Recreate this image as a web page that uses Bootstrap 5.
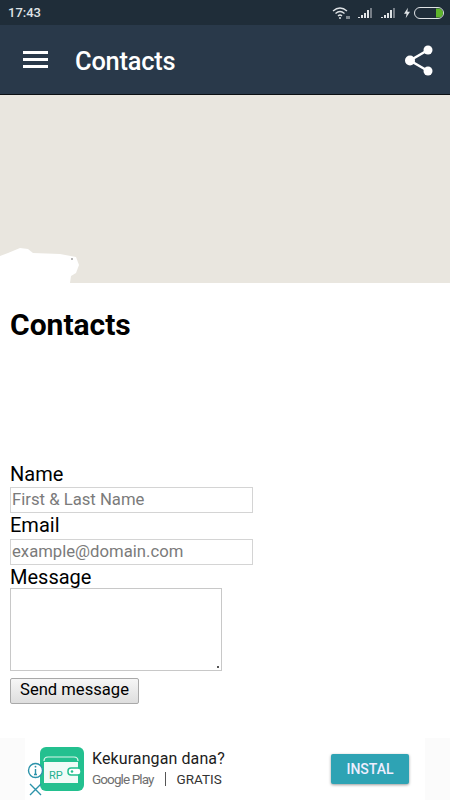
<!DOCTYPE html>
<html lang="en">
<head>
  <meta charset="UTF-8" />
  <meta name="viewport" content="width=device-width, initial-scale=1" />
  <title>Contacts</title>
  <link href="https://cdn.jsdelivr.net/npm/bootstrap@5.3.2/dist/css/bootstrap.min.css" rel="stylesheet" />
  <style>
    html, body { height: 800px; overflow: hidden; }
    body { font-family: Roboto, "Liberation Sans", sans-serif; background: #fff; color: #000; }
    .phone { width: 450px; height: 800px; }
    .status-strip { height: 25px; background: #1f2d39; color: #dfe3e6; font-size: 13px; font-weight: 500; padding: 0 6px 0 8px; }
    .time-text { padding-top: 1px; }
    .app-bar { height: 70px; background: #29394a; border-bottom: 1px solid #0b0f13; padding: 0 17px 0 23px; }
    .app-title { font-size: 25.4px; font-weight: 500; color: #fff; margin: 4px 0 0 27px; letter-spacing: -.2px; }
    .burger { width: 25px; }
    .burger span { display: block; height: 3px; background: #fff; margin-bottom: 4px; }
    .burger span:last-child { margin-bottom: 0; }
    .map-box { height: 188px; background: #e9e6df; }
    .map-blob { left: 0; bottom: 0; }
    .page-body { padding: 0 10px; height: 455px; }
    .page-title { font-size: 30px; font-weight: 700; line-height: 34px; margin: 25px 0 0; }
    .lost-text { height: 120px; }
    .field-label { display: block; font-size: 20px; line-height: 25px; height: 25px; }
    .label-email { height: 26px; }
    .label-msg { height: 23px; }
    .field-input { display: block; width: 243px; height: 26px; border: 1px solid #d4d4d4; padding: 0 1px 2px; font-size: 16.7px; color: #000; outline: 0; border-radius: 0; }
    .field-input::placeholder { color: #7b7b7b; opacity: 1; }
    .field-area { display: block; width: 212px; height: 83px; border: 1px solid #c8c8c8; outline: 0; border-radius: 0; padding: 1px; resize: none; background: linear-gradient(#555, #555) no-repeat right 2px bottom 2px / 2px 2px; }
    .send-btn { width: 129px; height: 26px; margin-top: 7px; padding: 0 0 2px; font-size: 16.6px; line-height: 22px; color: #000; border: 1px solid #a9a9a9; border-radius: 2px; background: linear-gradient(#f6f6f6, #dedede); }
    .ad-strip { height: 62px; background: #fbfbfb; padding: 0 25px; }
    .ad-inner { height: 62px; background: #fff; }
    .ad-icon { left: 15px; top: 9px; }
    .ad-info { left: 2px; top: 24px; }
    .ad-close { left: 4px; top: 45px; }
    .ad-copy { left: 67px; top: 10px; }
    .ad-head { font-size: 16px; line-height: 22px; color: #1c1c1c; letter-spacing: .1px; }
    .ad-sub { font-size: 13.5px; line-height: 18px; color: #333; }
    .ad-play { color: #6f6f6f; letter-spacing: -.9px; }
    .ad-bar { width: 1px; height: 14px; background: #555; margin: 0 11px; }
    .ad-btn { left: 306px; top: 16px; width: 78px; height: 30px; background: #2ea3b4; color: #eef; font-size: 14px; font-weight: 500; border-radius: 2px; box-shadow: 0 1px 3px rgba(0,0,0,.4); }
  </style>
</head>
<body>
  <div class="phone d-flex flex-column">
    <div class="status-strip d-flex align-items-center justify-content-between">
      <span class="time-text">17:43</span>
      <div class="d-flex align-items-center">
        <svg width="18" height="14" viewBox="0 0 18 14" fill="none" stroke="#dfe3e6" stroke-width="1.3">
          <path d="M1 5 Q8 -1 15 5" />
          <path d="M3.5 7.5 Q8 3.5 12.5 7.5" />
          <path d="M6 10 Q8 8 10 10" />
          <circle cx="8" cy="12" r="1" fill="#dfe3e6" stroke="none" />
          <path d="M15 10v3M17 10v3" stroke-width="1" />
        </svg>
        <svg class="ms-2" width="15" height="11" viewBox="0 0 15 11" fill="#dfe3e6"><path d="M0 10h2v1H0zM3 8h2v3H3zM6 6h2v5H6zM9 3h2v8H9z" /><path d="M12 1h2v10h-2z" opacity=".45" /></svg>
        <svg class="ms-2" width="15" height="11" viewBox="0 0 15 11" fill="#dfe3e6"><path d="M0 10h2v1H0zM3 8h2v3H3zM6 6h2v5H6zM9 3h2v8H9z" /><path d="M12 1h2v10h-2z" opacity=".45" /></svg>
        <svg class="ms-2" width="6" height="12" viewBox="0 0 7 12" fill="#dfe3e6"><path d="M4.5 0 0 7h3l-1 5 5-7.500H4z" /></svg>
        <svg class="ms-1" width="30" height="12" viewBox="0 0 30 12"><rect x=".5" y=".5" width="29" height="11" rx="5.500" fill="none" stroke="#dfe3e6" /><path d="M22 1.500h2.500a4.500 4.500 0 0 1 0 9H22z" fill="#5fb52c" /></svg>
      </div>
    </div>

    <div class="app-bar d-flex align-items-center">
      <div class="burger"><span></span><span></span><span></span></div>
      <div class="app-title flex-grow-1">Contacts</div>
      <svg width="30" height="32" viewBox="0 0 30 32" fill="#fff" stroke="#fff">
        <path d="M25 6 7 16.500 25 27" fill="none" stroke-width="2.500" />
        <circle cx="25" cy="6" r="4.500" stroke="none" />
        <circle cx="7" cy="16.500" r="5" stroke="none" />
        <circle cx="25" cy="27" r="4.500" stroke="none" />
      </svg>
    </div>

    <div class="map-box position-relative">
      <svg class="map-blob position-absolute" width="80" height="38" viewBox="0 0 80 38" fill="#fff">
        <path d="M0 11 8 8 20 3 28 4 33 8 60 9 76 12 79 20 76 28 71 31 70 38H0z" />
        <circle cx="72" cy="14" r=".7" fill="#333" />
      </svg>
    </div>

    <div class="page-body">
      <h1 class="page-title">Contacts</h1>
      <div class="lost-text"></div>
      <form>
        <label class="field-label" for="nameField">Name</label>
        <input class="field-input" id="nameField" type="text" placeholder="First &amp; Last Name" />
        <label class="field-label label-email" for="emailField">Email</label>
        <input class="field-input" id="emailField" type="text" placeholder="example@domain.com" />
        <label class="field-label label-msg" for="msgField">Message</label>
        <textarea class="field-area" id="msgField"></textarea>
        <button class="send-btn" type="button">Send message</button>
      </form>
    </div>

    <div class="ad-strip">
      <div class="ad-inner position-relative">
        <svg class="ad-icon position-absolute" width="44" height="44" viewBox="0 0 44 44">
          <rect width="44" height="44" rx="6" fill="#23c08f" />
          <path d="M4 36V14q0-4 4-4h26q4 0 4 4v22z" fill="#f1fbf7" />
          <path d="M4 14q0-4 4-4h26q4 0 4 4v1H4z" fill="#23c08f" />
          <path d="M4 14q0-4 4-4h26q4 0 4 4" fill="none" stroke="#d8f5ea" stroke-width="1.200" />
          <rect x="28" y="21" width="13" height="7" rx="3" fill="#fff" stroke="#23c08f" stroke-width="1.500" />
          <circle cx="32" cy="24.500" r="1.300" fill="#23c08f" />
          <text x="9" y="32" font-size="11" fill="#23b08f" font-family="Roboto, sans-serif">RP</text>
        </svg>
        <svg class="ad-info position-absolute" width="17" height="17" viewBox="0 0 17 17" fill="none" stroke="#2c93aa" stroke-width="1.400">
          <circle cx="8.500" cy="8.500" r="7" fill="#fff" />
          <path d="M8.500 7v5.500M7 12.500h3" />
          <circle cx="8.500" cy="4.700" r=".9" fill="#2c93aa" stroke="none" />
        </svg>
        <svg class="ad-close position-absolute" width="13" height="13" viewBox="0 0 13 13" stroke="#2c93aa" stroke-width="1.400"><path d="M1 1l11 11M12 1 1 12" /></svg>
        <div class="ad-copy position-absolute">
          <div class="ad-head">Kekurangan dana?</div>
          <div class="ad-sub d-flex align-items-center"><span class="ad-play">Google Play</span><span class="ad-bar"></span><span>GRATIS</span></div>
        </div>
        <div class="ad-btn position-absolute d-flex align-items-center justify-content-center">INSTAL</div>
      </div>
    </div>
  </div>
  <script src="https://cdn.jsdelivr.net/npm/bootstrap@5.3.2/dist/js/bootstrap.bundle.min.js"></script>
</body>
</html>
